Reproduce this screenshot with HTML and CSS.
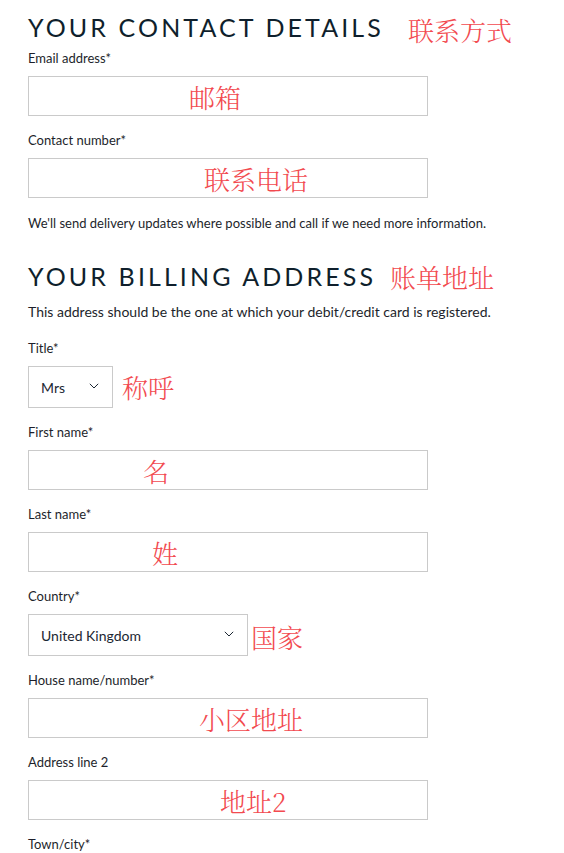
FILE: index.html
```html
<!DOCTYPE html>
<html lang="en">
<head>
<meta charset="utf-8">
<title>Checkout details</title>
<link rel="stylesheet" href="styles.css">
</head>
<body>
<main class="page">
  <section class="section">
    <h2 class="heading heading-contact">YOUR CONTACT DETAILS<span class="note note-head">联系方式</span></h2>
    <div class="field field-first">
      <label class="label">Email address*</label>
      <div class="box box-wide"><span class="note note-email">邮箱</span></div>
    </div>
    <div class="field">
      <label class="label">Contact number*</label>
      <div class="box box-wide"><span class="note note-phone">联系电话</span></div>
    </div>
    <p class="help">We'll send delivery updates where possible and call if we need more information.</p>
  </section>

  <section class="section">
    <h2 class="heading heading-billing">YOUR BILLING ADDRESS<span class="note note-head2">账单地址</span></h2>
    <p class="intro">This address should be the one at which your debit/credit card is registered.</p>
    <div class="field field-title">
      <label class="label">Title*</label>
      <div class="row">
        <div class="box select select-title"><span class="value">Mrs</span><svg class="chev" width="10" height="6" viewBox="0 0 10 6"><path d="M0.8 0.8 L5 5 L9.2 0.8" fill="none" stroke="#1c2733" stroke-width="1"/></svg></div>
        <span class="note note-title">称呼</span>
      </div>
    </div>
    <div class="field">
      <label class="label">First name*</label>
      <div class="box box-wide"><span class="note note-first">名</span></div>
    </div>
    <div class="field">
      <label class="label">Last name*</label>
      <div class="box box-wide"><span class="note note-last">姓</span></div>
    </div>
    <div class="field">
      <label class="label">Country*</label>
      <div class="row">
        <div class="box select select-country"><span class="value">United Kingdom</span><svg class="chev" width="10" height="6" viewBox="0 0 10 6"><path d="M0.8 0.8 L5 5 L9.2 0.8" fill="none" stroke="#1c2733" stroke-width="1"/></svg></div>
        <span class="note note-country">国家</span>
      </div>
    </div>
    <div class="field">
      <label class="label">House name/number*</label>
      <div class="box box-wide"><span class="note note-house">小区地址</span></div>
    </div>
    <div class="field">
      <label class="label">Address line 2</label>
      <div class="box box-wide"><span class="note note-addr2">地址2</span></div>
    </div>
    <div class="field">
      <label class="label">Town/city*</label>
    </div>
  </section>
</main>
</body>
</html>
```
FILE: styles.css
```css
* { box-sizing: border-box; }
html, body { margin: 0; padding: 0; background: #fff; }
body {
  font-family: Lato, "Liberation Sans", "Noto Sans CJK SC", sans-serif;
  color: #1d1f2b;
}
.page { padding: 9px 0 0 28px; }
.section { margin: 0; }
.heading {
  margin: 0;
  font-weight: 400;
  font-size: 25px;
  line-height: 28px;
  letter-spacing: 3.1px;
  color: #0f1f2c;
  display: flex;
  align-items: center;
}
.heading-billing { margin-top: 28px; }
.note {
  font-family: "Noto Serif CJK SC", "Noto Sans CJK SC", serif;
  font-weight: 300;
  color: #f24a4f;
  font-size: 26px;
  line-height: 30px;
  letter-spacing: 0;
}
.note-head { margin-left: 24px; margin-top: 6px; }
.note-head2 { margin-left: 14px; margin-top: 2px; }
.field-first { margin-top: 4px; }
.label {
  display: block;
  font-size: 13px;
  line-height: 18px;
  margin-bottom: 9px;
}
.field + .field { margin-top: 15px; }
.box {
  height: 40px;
  border: 1px solid #cacaca;
  display: flex;
  align-items: center;
}
.box-wide { width: 400px; }
.box .note { margin-top: 2px; }
.note-email { margin-left: 160px; }
.note-phone { margin-left: 175px; }
.note-first { margin-left: 114px; }
.note-last { margin-left: 123px; }
.note-house { margin-left: 170px; }
.note-addr2 { margin-left: 191px; }
.help {
  margin: 16px 0 0;
  font-size: 13px;
  line-height: 18px;
}
.intro {
  margin: 11px 0 0;
  font-size: 14px;
  line-height: 18px;
}
.field-title { margin-top: 18px; }
.row { display: flex; align-items: center; }
.select {
  height: 42px;
  padding: 0 13px 0 12px;
  justify-content: space-between;
}
.select .value { font-size: 14px; color: #1c2733; }
.select-title { width: 85px; }
.select-country { width: 220px; }
.chev { margin-top: -2px; display: block; }
.note-title { margin-left: 9px; }
.note-country { margin-left: 3px; margin-top: 4px; }
```
